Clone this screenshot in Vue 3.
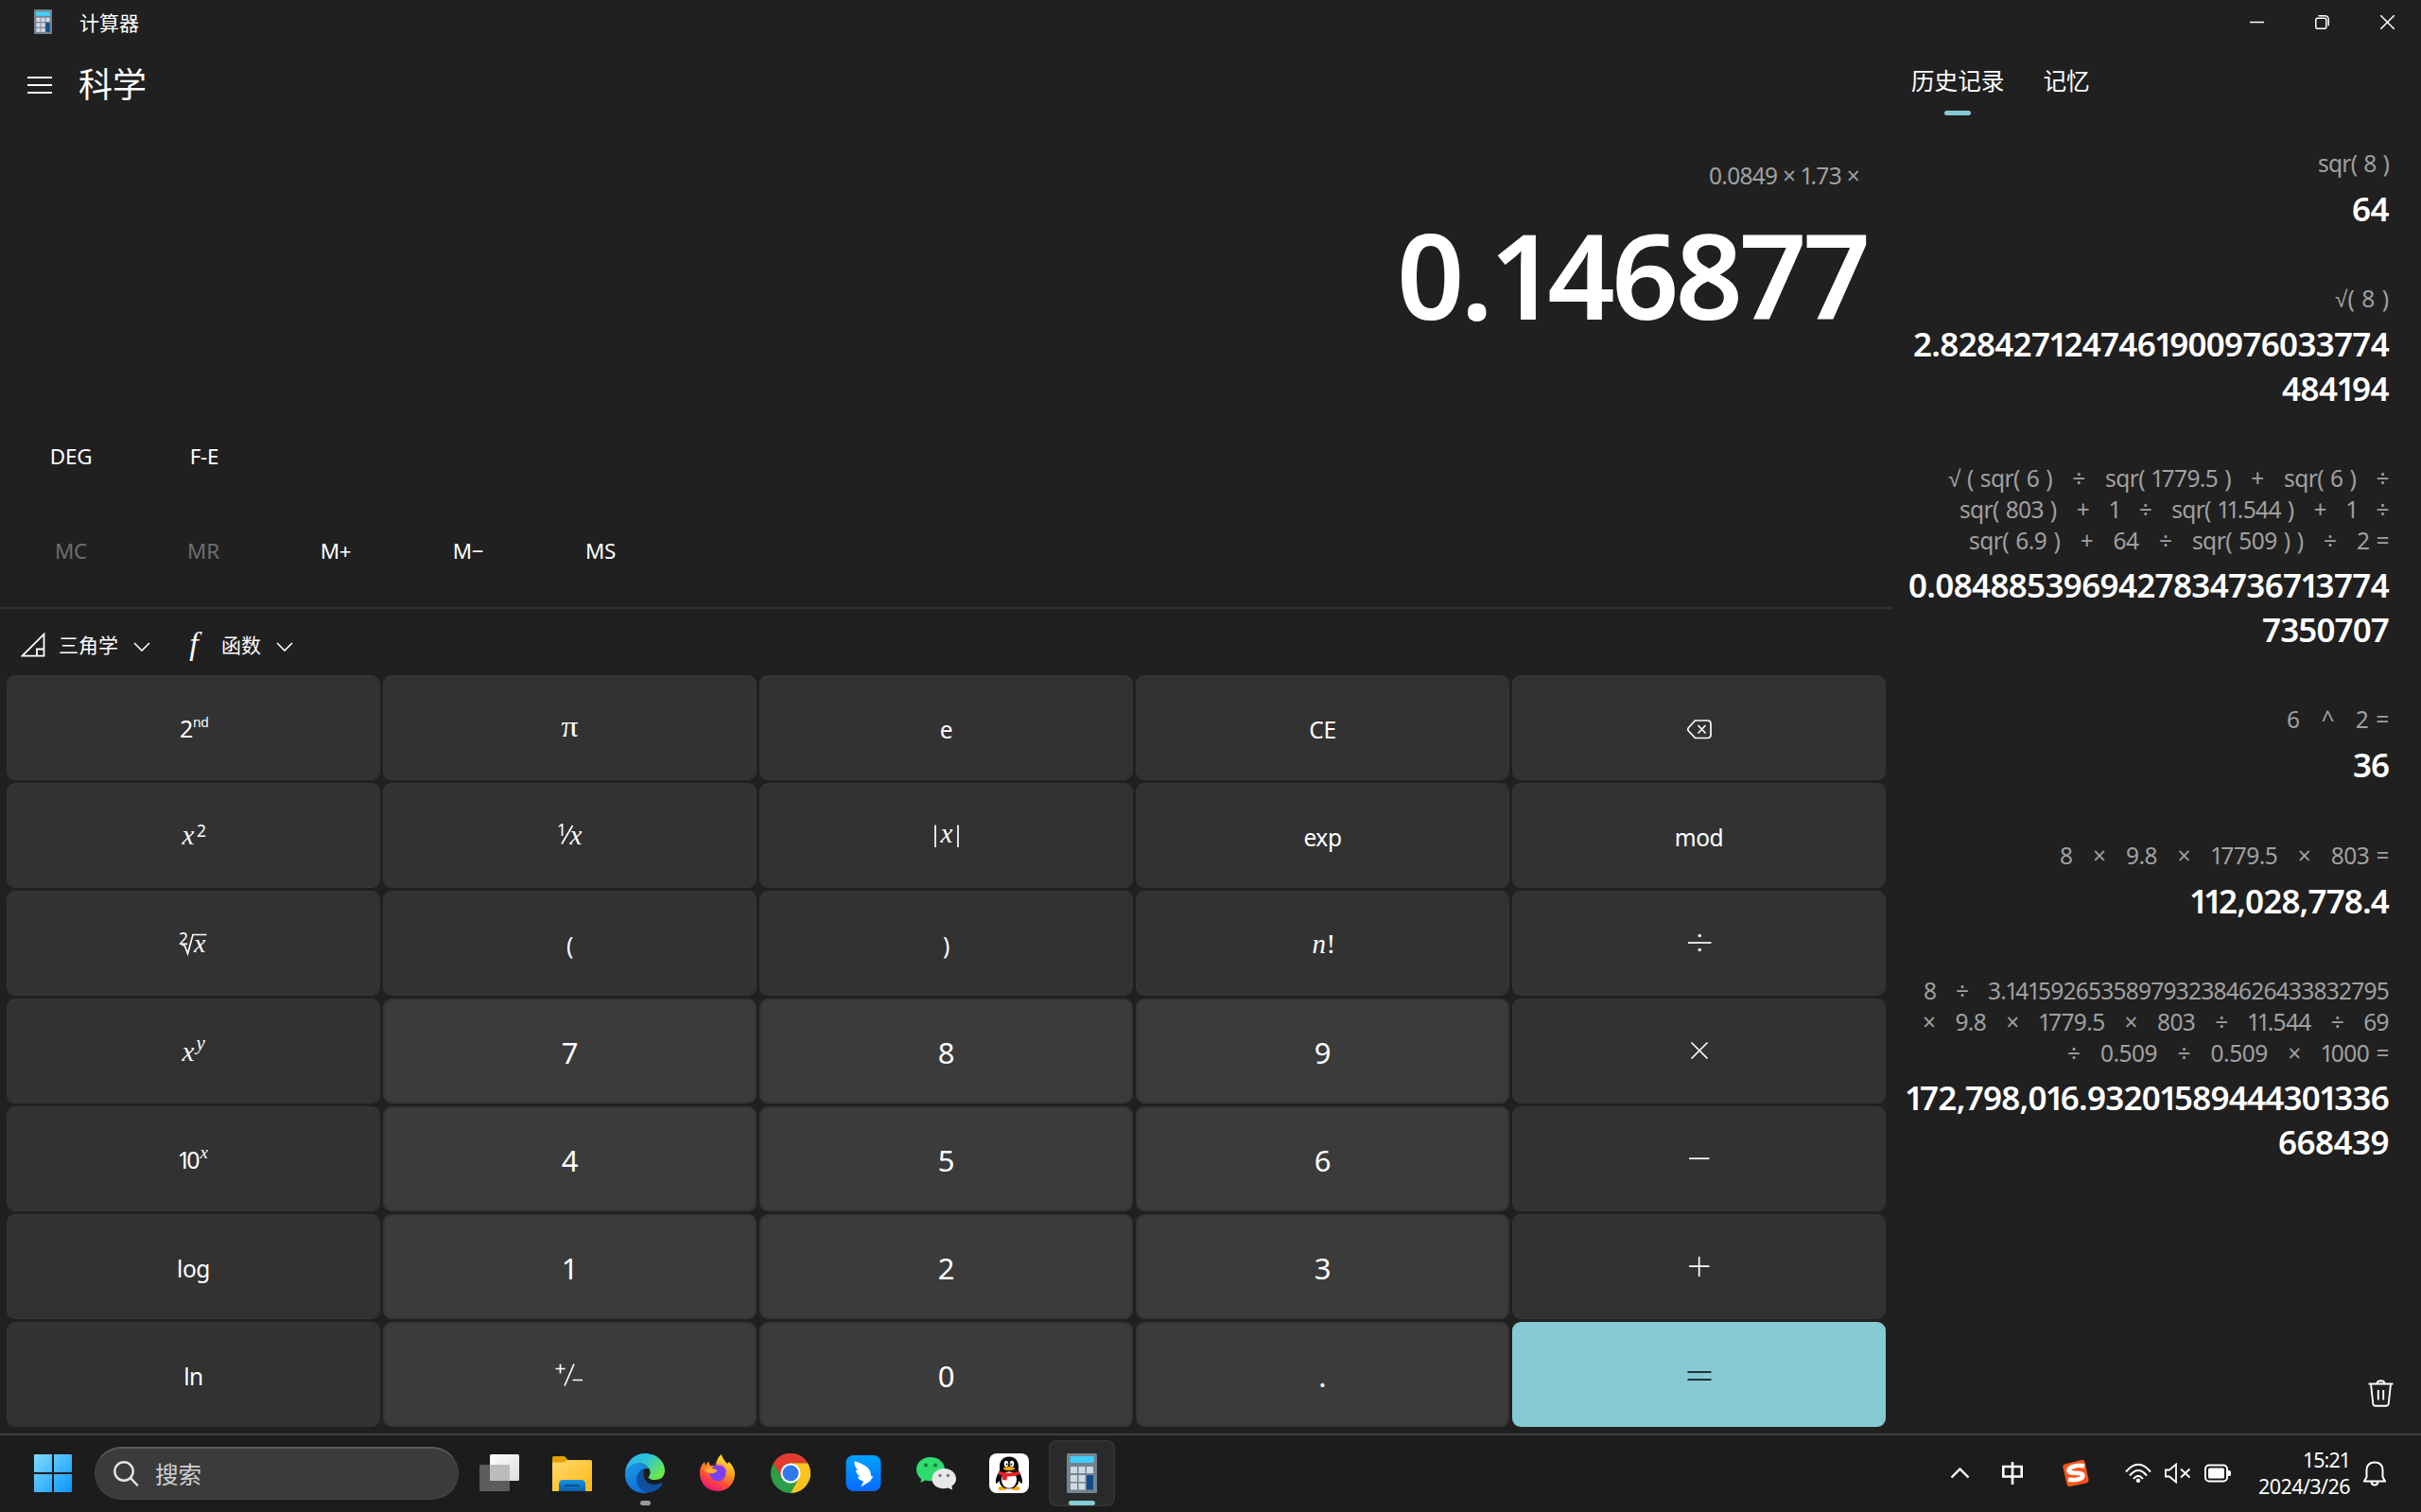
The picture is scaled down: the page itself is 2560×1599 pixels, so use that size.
<script setup>
import { h } from 'vue'

// Text run whose digit "1" is set proportionally, as in the system UI font
const glyphClass = { 1: 'one', '√': 'surd' }
const Run = (props) =>
  h('span', { class: 'run' }, props.t.split(/([1√])/).map((s) => (glyphClass[s] ? h('span', { class: glyphClass[s] }, s) : s)))
Run.props = ['t']

// Spreads or tightens letters so that the run takes the given width
const vFit = {
  mounted(el, { value }) {
    const n = [...el.textContent].length
    el.style.letterSpacing = (value - el.getBoundingClientRect().width) / n + 'px'
  },
}

const memory = [
  { t: 'MC', off: true },
  { t: 'MR', off: true },
  { t: 'M+' },
  { t: 'M−' },
  { t: 'MS' },
]

const keys = [
  'nd', 'pi', 'e', 'CE', 'back',
  'sq', 'inv', 'abs', 'exp', 'mod',
  'root', '(', ')', 'fact', 'div',
  'pow', '7', '8', '9', 'mul',
  'ten', '4', '5', '6', 'sub',
  'log', '1', '2', '3', 'add',
  'ln', 'neg', '0', '.', 'eq',
]
const plain = ['e', 'CE', 'exp', 'mod', '(', ')', 'log', 'ln']
const isNum = (k) => /^[0-9.]$/.test(k)

const history = [
  { e: [['sqr( 8 )', 75]], r: [['64', 39]] },
  { e: [['√( 8 )', 57]], r: [['2.8284271247461900976033774', 503], ['484194', 113]] },
  {
    e: [
      ['√ ( sqr( 6 )   ÷   sqr( 1779.5 )   +   sqr( 6 )   ÷', 466],
      ['sqr( 803 )   +   1   ÷   sqr( 11.544 )   +   1   ÷', 454],
      ['sqr( 6.9 )   +   64   ÷   sqr( 509 ) )   ÷   2 =', 444],
    ],
    r: [['0.0848853969427834736713774', 508], ['7350707', 134]],
  },
  { e: [['6   ^   2 =', 108]], r: [['36', 38]] },
  { e: [['8   ×   9.8   ×   1779.5   ×   803 =', 348]], r: [['112,028,778.4', 210]] },
  {
    e: [
      ['8   ÷   3.1415926535897932384626433832795', 492],
      ['×   9.8   ×   1779.5   ×   803   ÷   11.544   ÷   69', 493],
      ['÷   0.509   ÷   0.509   ×   1000 =', 340],
    ],
    r: [['172,798,016.93201589444301336', 511], ['668439', 117]],
  },
]
</script>

<template>
  <div class="screen">
    <div class="app">
      <header class="titlebar">
        <svg class="appicon" width="19" height="26" viewBox="0 0 32 42" preserveAspectRatio="none">
          <rect width="32" height="42" rx="1.500" fill="#75838f" />
          <rect x="3.500" y="4" width="25" height="7" fill="#3fd2fa" />
          <g fill="#d2dbe3">
            <rect x="4" y="14" width="7" height="7" /><rect x="12.500" y="14" width="7" height="7" /><rect x="21" y="14" width="7" height="7" />
            <rect x="4" y="23" width="7" height="7" /><rect x="12.500" y="23" width="7" height="7" />
            <rect x="4" y="32" width="7" height="6.500" /><rect x="12.500" y="32" width="7" height="6.500" />
          </g>
          <rect x="21" y="23" width="7" height="15.500" fill="#124a8c" />
        </svg>
        <span class="title">计算器</span>
        <div class="winbtns">
          <svg width="15" height="15" viewBox="0 0 15 15"><path d="M0 7.500H15" /></svg>
          <svg width="15" height="15" viewBox="0 0 15 15"><rect x=".8" y="3.300" width="11" height="11" rx="1.800" /><path d="M3.500 .8H10.500A3.700 3.700 0 0 1 14.200 4.500V11.300" /></svg>
          <svg width="15" height="15" viewBox="0 0 15 15"><path d="M0 0L15 15M15 0L0 15" /></svg>
        </div>
      </header>

      <div class="body">
        <main class="calc">
          <div class="modebar">
            <svg width="26" height="18" viewBox="0 0 26 18" stroke="#fff" stroke-width="1.800"><path d="M0 1H26M0 9H26M0 17H26" /></svg>
            <span>科学</span>
          </div>
          <div class="expr"><Run v-fit="159" t="0.0849 × 1.73 ×" /></div>
          <div class="display"><Run v-fit="497" t="0.146877" /></div>
          <div class="row deg"><span>DEG</span><span class="fe">F-E</span></div>
          <div class="row mem">
            <span v-for="m in memory" :key="m.t" :class="{ off: m.off }">{{ m.t }}</span>
          </div>
          <div class="funcs">
            <svg class="tri" width="26" height="26" viewBox="0 0 26 26"><path d="M1.500 24.700L24.500 1.700V24.700ZM17 24.700V17.500H24.500" /></svg>
            <span class="fl">三角学</span>
            <svg class="chev" width="18" height="10" viewBox="0 0 18 10"><path d="M1 1L9 9L17 1" /></svg>
            <span class="fi">f</span>
            <span class="fl">函数</span>
            <svg class="chev" width="18" height="10" viewBox="0 0 18 10"><path d="M1 1L9 9L17 1" /></svg>
          </div>
          <div class="pad">
            <div v-for="k in keys" :key="k" class="key" :class="{ num: isNum(k) || k === 'neg', eq: k === 'eq' }">
              <span v-if="isNum(k)" class="digit">{{ k }}</span>
              <span v-else-if="plain.includes(k)" class="word">{{ k }}</span>
              <svg v-else width="60" height="48" viewBox="-30 -24 60 48">
                <g v-if="k === 'nd'"><text x="-15" y="10" font-size="25" textLength="14">2</text><text x="-1" y="-1" font-size="14" letter-spacing="-.4">nd</text></g>
                <text v-else-if="k === 'pi'" class="m up" x="-9.500" y="8.500" font-size="32" textLength="18" lengthAdjust="spacingAndGlyphs">π</text>
                <g v-else-if="k === 'sq'"><text class="m" x="-12.500" y="8.500" font-size="29">x</text><text x="3" y="1" font-size="17.500">2</text></g>
                <g v-else-if="k === 'inv'"><text x="-14" y="0" font-size="17.500">1</text><path d="M2.500 -11L-9 8.500" /><text class="m" x="-.5" y="8.500" font-size="29">x</text></g>
                <g v-else-if="k === 'abs'"><text class="m" x="-6.500" y="6.500" font-size="29">x</text><path d="M-12 -11.500V12M12 -11.500V12" /></g>
                <g v-else-if="k === 'root'"><text x="-16" y="0.500" font-size="17.500">2</text><path d="M-12.500 2L-10 1L-6.500 10.500L-1 -9.500H13.500" /><text class="m" x="0" y="9" font-size="28">x</text></g>
                <g v-else-if="k === 'fact'"><text class="m" x="-11.500" y="9.500" font-size="29">n</text><text class="m up" x="3.500" y="9.500" font-size="29">!</text></g>
                <g v-else-if="k === 'pow'"><text class="m" x="-12.500" y="9.500" font-size="29">x</text><text class="m" x="2.500" y="-2" font-size="21">y</text></g>
                <g v-else-if="k === 'ten'"><text x="-17.500" y="9.500" font-size="25" textLength="24">10</text><text class="m" x="6.500" y="-1.500" font-size="19">x</text></g>
                <g v-else-if="k === 'neg'"><path d="M-15.500 -6.500H-5.500M-10.500 -11.500V-1.500M4 -11.500L-6 11.500M2.500 5.500H13" /></g>
                <g v-else-if="k === 'back'"><path d="M-4.500 -8H8.500Q12 -8 12 -4.500V7Q12 10.500 8.500 10.500H-4.500L-11.500 3Q-13 1.200 -11.500 -.500ZM-1.500 -3L6.500 5.500M6.500 -3L-1.500 5.500" /></g>
                <g v-else-if="k === 'div'"><path d="M-12 -1H12.500" /><circle cx=".2" cy="-8.500" r="1.700" class="dot" /><circle cx=".2" cy="6.500" r="1.700" class="dot" /></g>
                <path v-else-if="k === 'mul'" d="M-8.500 -9.500L8.500 7.500M8.500 -9.500L-8.500 7.500" />
                <path v-else-if="k === 'sub'" d="M-11 -.8H10.500" />
                <path v-else-if="k === 'add'" d="M-11 -.8H10.500M-.3 -11V10" />
                <path v-else d="M-12.500 -3H12.500M-12.500 5H12.500" />
              </svg>
            </div>
          </div>
        </main>

        <aside class="side">
          <div class="tabs">
            <span class="tab on">历史记录</span>
            <span class="tab">记忆</span>
          </div>
          <div class="hist">
            <div v-for="(it, i) in history" :key="i" class="entry">
              <div v-for="l in it.e" :key="l[0]" class="el"><Run v-fit="l[1]" :t="l[0]" /></div>
              <div class="res">
                <div v-for="l in it.r" :key="l[0]" class="rl"><Run v-fit="l[1]" :t="l[0]" /></div>
              </div>
            </div>
          </div>
          <svg class="trash" width="27" height="29" viewBox="0 0 27 29">
            <path d="M.5 4.500H26.500M3 4.500L5.300 25.500Q5.600 27.800 8 27.800H19Q21.400 27.800 21.700 25.500L24 4.500M9.500 4.500Q9.500 1.200 13.500 1.200T17.500 4.500M10.800 11V21.500M16.200 11V21.500" />
          </svg>
        </aside>
      </div>
    </div>

    <footer class="taskbar">
      <svg class="start" width="40" height="40" viewBox="0 0 40 40">
        <defs>
          <linearGradient id="win" x1="0" y1="0" x2="1" y2="1" gradientUnits="objectBoundingBox"><stop offset="0" stop-color="#7fdcff" /><stop offset="1" stop-color="#0a96ff" /></linearGradient>
        </defs>
        <path fill="url(#win)" d="M1 0H19V19H0V1Q0 0 1 0ZM21 0H39Q40 0 40 1V19H21ZM0 21H19V40H1Q0 40 0 39ZM21 21H40V39Q40 40 39 40H21Z" />
      </svg>
      <div class="search">
        <svg width="27" height="27" viewBox="0 0 27 27"><circle cx="11" cy="11" r="9.700" /><path d="M18 18L25 25.500" stroke-linecap="round" /></svg>
        <span>搜索</span>
      </div>
      <div class="tasks">
        <div class="task">
          <svg width="42" height="42" viewBox="0 0 42 42">
            <defs><linearGradient id="tv" x1="0" y1="0" x2="1" y2="1"><stop offset="0" stop-color="#fff" /><stop offset="1" stop-color="#dcdcdc" /></linearGradient></defs>
            <rect x="0" y="12" width="32" height="28" rx="1.500" fill="#5c5c5c" /><rect x="11" y="1" width="31" height="28" rx="1.500" fill="url(#tv)" /><path d="M11 12H32V29H11Z" fill="#bcbcbc" />
          </svg>
        </div>
        <div class="task">
          <svg width="42" height="42" viewBox="0 0 42 42">
            <defs>
              <linearGradient id="fo" x1="0" y1="0" x2="1" y2="1"><stop offset="0" stop-color="#ffd96b" /><stop offset="1" stop-color="#fdb813" /></linearGradient>
              <linearGradient id="fb" x1="0" y1="0" x2="0" y2="1"><stop offset="0" stop-color="#1a95e0" /><stop offset="1" stop-color="#0a5fb0" /></linearGradient>
            </defs>
            <path d="M0 4.500Q0 3 1.500 3H13L17 7.500V14H0Z" fill="#e0a000" /><path d="M0 9.500H12L16 7H40.500Q42 7 42 8.500V40H0Z" fill="url(#fo)" />
            <path d="M7 40V32.500Q7 28 11.500 28H30.500Q35 28 35 32.500V40Z" fill="url(#fb)" /><path d="M13 34H29" stroke="#0c4f93" stroke-width="2" />
          </svg>
        </div>
        <div class="task run-dot">
          <svg width="42" height="42" viewBox="0 0 42 42">
            <defs>
              <linearGradient id="e1" x1="0" y1="0" x2="1" y2=".6"><stop offset="0" stop-color="#2ba9f5" /><stop offset=".5" stop-color="#2cc4d8" /><stop offset="1" stop-color="#6ae84a" /></linearGradient>
              <linearGradient id="e2" x1="0" y1="0" x2=".5" y2="1"><stop offset="0" stop-color="#1e9be6" /><stop offset="1" stop-color="#0a6fd8" /></linearGradient>
            </defs>
            <path d="M0 21C1 8 10 0 21 0C34 0 42 9 42 18C42 25 37 28 31.500 28C26 28 24 26 25 24.500C27 22 27 19 25.500 16.500C20 7 6 9 0 21Z" fill="url(#e1)" />
            <path d="M0 21C3 9 20 7 25.500 16.500C19 14.500 13 20 13.500 27C14 36 20 41 25 41.600C10 44.500 -1 34 0 21Z" fill="url(#e2)" />
            <path d="M20 16.800C8 21 10 39 25 41.600C31 41 37 37 39.500 32.500C40 31 39 30.800 38 31.300C27 36 17 30 20 16.800Z" fill="#10509f" />
          </svg>
        </div>
        <div class="task">
          <svg width="42" height="42" viewBox="0 0 42 42">
            <defs>
              <linearGradient id="f1" x1=".8" y1="0" x2=".3" y2="1"><stop offset="0" stop-color="#fff04a" /><stop offset=".4" stop-color="#ffa21e" /><stop offset=".7" stop-color="#ff4b3a" /><stop offset="1" stop-color="#e5107f" /></linearGradient>
            </defs>
            <path d="M21 40C9 40 2 31 2 21C2 15 4 12 7 9L8 13L11 8.500L13 13L19 13C19 8 22 3 25 1C26 6 29 8 31 11L33 9C37 13 39 17 39 22C39 32 31 40 21 40Z" fill="url(#f1)" />
            <circle cx="21" cy="21" r="8.500" fill="#7a3ff0" /><path d="M14 12C20 9 27 12 28 18L31 20C29 15 26 11 21 11Z" fill="#b43be0" /><path d="M6 17L13 15L21 18L17 21L11 21Z" fill="#ffae2a" />
          </svg>
        </div>
        <div class="task">
          <svg width="42" height="42" viewBox="0 0 42 42">
            <circle cx="21" cy="21" r="21" fill="#2c9d48" />
            <path d="M2.800 10.500A21 21 0 0 1 39.200 10.500H21L12 26.200Z" fill="#e33b2e" />
            <path d="M39.200 10.500A21 21 0 0 1 21 42L30 26.200L21 10.500Z" fill="#fcc31e" />
            <circle cx="21" cy="21" r="10.500" fill="#fff" /><circle cx="21" cy="21" r="8.500" fill="#3079ea" />
          </svg>
        </div>
        <div class="task">
          <svg width="42" height="42" viewBox="0 0 42 42">
            <defs><linearGradient id="bd" x1="0" y1="0" x2="0" y2="1"><stop offset="0" stop-color="#00a4ff" /><stop offset="1" stop-color="#0569ff" /></linearGradient></defs>
            <rect x="2.500" y="2" width="37" height="38" rx="8" fill="url(#bd)" />
            <path d="M12 8C19 11 29 14 29 23C29 24.500 30 24.500 31 24C31 26 29 27.500 28 28.500L29.500 28.500L18.500 35.500L21 29.500C17 28.500 15 26.500 15 24.500L18 24.500C14 22.500 13 19.500 13 17.500L16 18C12 15.500 11 11 12 8Z" fill="#fff" />
          </svg>
        </div>
        <div class="task">
          <svg width="42" height="42" viewBox="0 0 42 42">
            <path d="M15 4C6 4 0 10 0 17C0 21.500 2 24.500 5 27L4.500 31L9.500 28.600C22 31 30 25 30 17C30 10 24 4 15 4Z" fill="#2fdb6d" />
            <circle cx="10" cy="12.500" r="2" fill="#147a3a" /><circle cx="20" cy="12.500" r="2" fill="#147a3a" />
            <path d="M29.500 16C22 16 16.500 21 16.500 27C16.500 34 24 39 33.500 36.500L38 38.500L37.500 34.500C40.500 32.500 42 30 42 27C42 21 37 16 29.500 16Z" fill="#e8e8e8" />
            <circle cx="25" cy="23.500" r="1.700" fill="#777" /><circle cx="33.500" cy="23.500" r="1.700" fill="#777" />
          </svg>
        </div>
        <div class="task">
          <svg width="42" height="42" viewBox="0 0 42 42">
            <rect width="42" height="42" rx="8" fill="#fff" />
            <ellipse cx="14" cy="37" rx="4.500" ry="2" fill="#f6a800" /><ellipse cx="28" cy="37" rx="4.500" ry="2" fill="#f6a800" />
            <path d="M21 3.500C13.500 3.500 11 9 11 14L11 19C8.500 22 6.500 27 7 31.500C8.500 32.500 9.500 30 10.500 29C11.500 34.500 15 37.500 21 37.500S30.500 34.500 31.500 29C32.500 30 33.500 32.500 35 31.500C35.500 27 33.500 22 31 19V14C31 9 28.500 3.500 21 3.500Z" fill="#0c0c0c" />
            <ellipse cx="21" cy="28" rx="8" ry="8.800" fill="#fff" />
            <ellipse cx="18" cy="11" rx="2.200" ry="3.200" fill="#fff" /><ellipse cx="24" cy="11" rx="2.200" ry="3.200" fill="#fff" /><circle cx="18.600" cy="11.500" r="1" /><circle cx="23.400" cy="11.500" r="1" />
            <ellipse cx="21" cy="16" rx="6" ry="2" fill="#f6a800" /><path d="M10 18.500Q21 23 32 18.500L32.500 22Q26 25 19 24.500L18.500 28.500L14 28V23.500L9.500 22Z" fill="#e62129" />
          </svg>
        </div>
        <div class="task active">
          <svg width="32" height="42" viewBox="0 0 32 42">
            <rect width="32" height="42" rx="1.500" fill="#75838f" />
            <rect x="3.500" y="3" width="25" height="7" rx=".8" fill="#3fcdf8" />
            <g fill="#d0dae2">
              <rect x="4" y="14" width="7" height="7" rx=".6" /><rect x="12.500" y="14" width="7" height="7" rx=".6" /><rect x="21" y="14" width="7" height="7" rx=".6" />
              <rect x="4" y="23" width="7" height="7" rx=".6" /><rect x="12.500" y="23" width="7" height="7" rx=".6" />
              <rect x="4" y="31.500" width="7" height="7" rx=".6" /><rect x="12.500" y="31.500" width="7" height="7" rx=".6" />
            </g>
            <rect x="21" y="23" width="7" height="15.500" rx=".6" fill="#124a8c" />
          </svg>
        </div>
      </div>
      <div class="tray">
        <svg class="up-arrow" width="21" height="12" viewBox="0 0 21 12"><path d="M1.500 10.500L10.500 1.500L19.500 10.500" /></svg>
        <svg class="ime" width="22" height="26" viewBox="0 0 22 26"><path d="M1.300 6H20.700V16.500H1.300ZM11 1V25" /></svg>
        <svg class="sogou" width="30" height="30" viewBox="0 0 30 30">
          <path d="M3 5.500L21 1Q24 .5 24.500 3L28.500 21.500Q29 24.500 26 25.500L9 29Q6 29.500 5.500 26.500L1.300 8.500Q1 6.200 3 5.500Z" fill="#f9541c" />
          <path d="M24 7.500C17 5.500 7 8.500 7.500 12.500C8 16.500 22 13 22.500 17.500C22.800 21.500 13 23 7 21.500" fill="none" stroke="#fff" stroke-width="4.600" />
        </svg>
        <svg class="wifi" width="28" height="22" viewBox="0 0 28 22"><path d="M1 9.500Q14 -6 27 9.500M5 13.500Q14 2.500 23 13.500M9 17Q14 10.500 19 17" /><circle cx="14" cy="18.800" r="2.200" fill="#fff" stroke="none" /></svg>
        <svg class="vol" width="28" height="22" viewBox="0 0 28 22"><path d="M1 7.500H5L12 1.500V20.500L5 14.500H1ZM17 6.500L26.500 15.500M26.500 6.500L17 15.500" /></svg>
        <svg class="bat" width="29" height="20" viewBox="0 0 29 20"><rect x="1" y="1.500" width="23" height="17" rx="4" /><rect x="4" y="4.500" width="17" height="11" rx="1.500" fill="#fff" stroke="none" /><path d="M25 7H26.500Q28 7 28 8.500V11.500Q28 13 26.500 13H25Z" fill="#fff" stroke="none" /></svg>
        <div class="clock"><span v-fit="50">15:21</span><span v-fit="97">2024/3/26</span></div>
        <svg class="bell" width="24" height="27" viewBox="0 0 24 27"><path d="M1 21.500H23L20.500 17V10Q20.500 1.500 12 1.500T3.500 10V17ZM8.500 22Q9 25.500 12 25.500T15.500 22" /></svg>
      </div>
    </footer>
  </div>
</template>

<style>
body { background: #202020; }
.run { white-space: pre; display: inline-block; }
.one { margin-left: -0.03em; margin-right: -0.09em; }
.display .one { margin-left: 0; margin-right: -0.05em; }
.surd { font-family: "Liberation Sans", sans-serif; }
</style>

<style scoped>
.screen {
  width: 2560px; height: 1599px; display: flex; flex-direction: column; overflow: hidden;
  background: #202020; color: #fff; font-family: "Noto Sans", "Noto Sans CJK SC", sans-serif;
}
svg { display: block; flex: none; }
.app { flex: 1; display: flex; flex-direction: column; min-height: 0; }
.titlebar { height: 46px; display: flex; align-items: center; padding: 0 28px 0 36px; box-sizing: border-box; }
.title { margin-left: 29px; font: 21px/30px "Noto Sans CJK SC", sans-serif; }
.winbtns { margin-left: auto; display: flex; gap: 54px; }
.winbtns svg { fill: none; stroke: #fff; stroke-width: 1.5; }
.body { flex: 1; display: flex; min-height: 0; }
.calc { width: 2000px; display: flex; flex-direction: column; }
.modebar { height: 88px; display: flex; align-items: center; gap: 28px; padding-left: 29px; font: 36px/52px "Noto Sans CJK SC", sans-serif; }
.modebar span { padding-bottom: 6px; }
.expr { height: 101px; line-height: 104px; text-align: right; padding-right: 34px; font-size: 24.5px; color: #a0a0a0; }
.display { height: 113px; line-height: 110px; text-align: right; padding-right: 26px; font-size: 125px; font-weight: 600; }
.row { display: flex; padding-left: 5px; font-size: 22.4px; letter-spacing: -0.2px; }
.row span { width: 140px; text-align: center; line-height: 40px; }
.deg { box-sizing: border-box; padding-top: 115px; height: 215px; }
.row .fe { width: 142px; }
.mem { height: 79px; }
.off { color: #6d6d6d; }
.funcs { height: 72px; box-sizing: border-box; border-top: 2px solid #333; display: flex; align-items: center; padding: 5px 0 0 22px; }
.fl { font: 21px/30px "Noto Sans CJK SC", sans-serif; padding-bottom: 1px; }
.tri { fill: none; stroke: #fff; stroke-width: 1.8; margin-right: 14px; }
.chev { fill: none; stroke: #fff; stroke-width: 1.6; margin: 4px 0 0 16px; }
.fi { font: italic 34px/30px "Liberation Serif", serif; width: 20px; margin: 0 19px 0 36px; text-align: center; padding-bottom: 2px; }
.pad { display: grid; grid-template-columns: repeat(5, 395px); grid-auto-rows: 111px; gap: 3px; padding-left: 7px; }
.key { display: flex; align-items: center; justify-content: center; box-sizing: border-box; border-radius: 9px; background: #323232; border: 1px solid #343434; border-top: 2px solid #353535; }
.num { background: #3b3b3b; border: 2px solid #353535; border-left-color: #343434; }
.eq { background: #86cad3; border: 0; color: #000; }
.key svg { fill: currentColor; overflow: visible; }
.key svg path { fill: none; stroke: currentColor; stroke-width: 1.7; }
.key .m { font-family: "Liberation Serif", serif; font-style: italic; }
.key .up { font-style: normal; }
.digit { font-size: 31px; line-height: 40px; padding-top: 2px; }
.word { font-size: 24.5px; line-height: 32px; padding-top: 3px; letter-spacing: -0.4px; }

.side { flex: 1; display: flex; flex-direction: column; }
.tabs { display: flex; gap: 41px; padding: 18px 0 0 21px; font: 24.6px/40px "Noto Sans CJK SC", sans-serif; height: 102px; box-sizing: border-box; }
.tab { display: flex; flex-direction: column; align-items: center; }
.on::after { content: ""; width: 28px; height: 5px; border-radius: 2.5px; background: #86cad3; margin-top: 13px; }
.hist { flex: 1; padding: 9px 34px 0 0; text-align: right; }
.entry { margin-bottom: 56px; }
.el { height: 32.8px; line-height: 32.8px; font-size: 24.5px; color: #a0a0a0; white-space: nowrap; word-spacing: 1.3px; }
.res { padding-top: 8px; }
.rl { height: 46.5px; line-height: 46.5px; font-size: 35px; font-weight: 600; white-space: nowrap; }
.trash { align-self: flex-end; margin: 0 29px 28px 0; fill: none; stroke: #fff; stroke-width: 1.9; }

.taskbar { height: 83px; flex: none; box-sizing: border-box; border-top: 2px solid #404040; background: #1c1c1c; display: flex; align-items: center; padding: 0 0 1px 36px; }
.search { margin-left: 24px; width: 385px; height: 56px; box-sizing: border-box; border-radius: 28px; background: #3b3b3b; border: 1px solid #454545; border-top: 2px solid #5a5a5a; display: flex; align-items: center; padding-left: 19px; gap: 17px; color: #cfcfcf; font: 24.6px/36px "Noto Sans CJK SC", sans-serif; }
.search span { padding-bottom: 2px; }
.search svg { fill: none; stroke: #e4e4e4; stroke-width: 2.4; }
.tasks { display: flex; margin-left: 8px; align-self: stretch; align-items: center; gap: 7px; }
.task { width: 70px; height: 70px; box-sizing: border-box; display: flex; align-items: center; justify-content: center; position: relative; border-radius: 8px; }
.active { background: #2a2a2a; border: 2px solid #333; }
.run-dot::after, .active::after { content: ""; position: absolute; bottom: 1px; width: 11px; height: 5px; border-radius: 2.5px; background: #9a9a9a; }
.active::after { width: 28px; bottom: -1px; background: #86cad3; }
.tray { flex: 1; display: flex; align-items: center; padding-left: 883px; }
.tray svg { fill: none; stroke: #fff; stroke-width: 2; }
.tray .up-arrow { stroke-width: 2.4; }
.tray .ime { margin-left: 34px; stroke-width: 2.6; }
.tray .sogou { margin-left: 41px; stroke: none; }
.tray .wifi { margin-left: 37px; }
.tray .vol { margin-left: 14px; stroke-width: 1.8; }
.tray .bat { margin-left: 14px; }
.clock { width: 125px; display: flex; flex-direction: column; align-items: flex-end; font-size: 21.5px; line-height: 28px; padding-bottom: 1px; }
.tray .bell { margin-left: 14px; }
</style>
